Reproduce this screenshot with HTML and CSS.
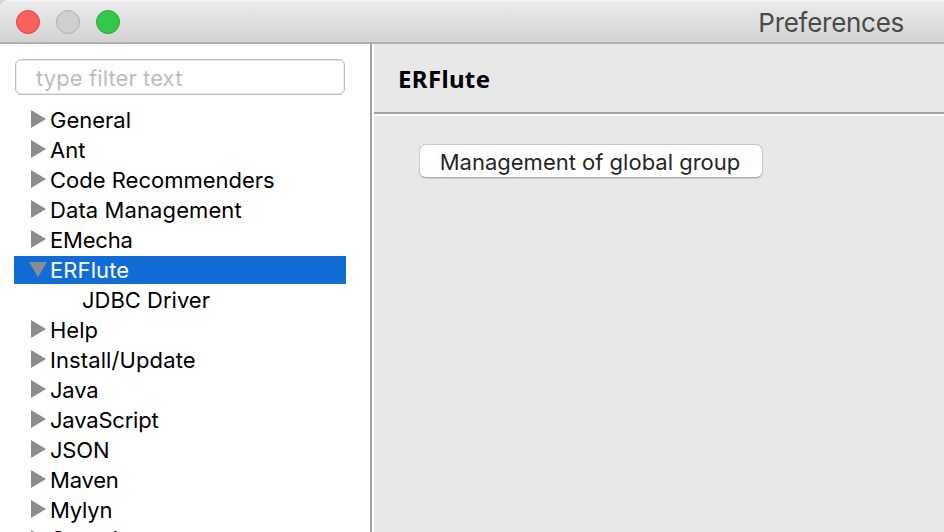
FILE: index.html
```html
<!DOCTYPE html>
<html lang="en">
<head>
<meta charset="utf-8">
<title>Preferences</title>
<link rel="stylesheet" href="styles.css">
</head>
<body>
<div class="window">
  <header class="titlebar">
    <div class="lights">
      <span class="light close"></span>
      <span class="light minimize"></span>
      <span class="light zoom"></span>
    </div>
    <span class="title">Preferences</span>
  </header>
  <div class="content">
    <aside class="sidebar">
      <input class="filter" type="text" placeholder="type filter text">
      <ul class="tree">
        <li class="row"><i class="arrow"></i><span>General</span></li>
        <li class="row"><i class="arrow"></i><span>Ant</span></li>
        <li class="row"><i class="arrow"></i><span>Code Recommenders</span></li>
        <li class="row"><i class="arrow"></i><span class="loose">Data Management</span></li>
        <li class="row"><i class="arrow"></i><span class="tight">EMecha</span></li>
        <li class="row selected"><i class="arrow open"></i><span class="loose">ERFlute</span></li>
        <li class="row child"><span>JDBC Driver</span></li>
        <li class="row"><i class="arrow"></i><span>Help</span></li>
        <li class="row"><i class="arrow"></i><span class="loose">Install/Update</span></li>
        <li class="row"><i class="arrow"></i><span class="tight">Java</span></li>
        <li class="row"><i class="arrow"></i><span class="tight">JavaScript</span></li>
        <li class="row"><i class="arrow"></i><span class="tight">JSON</span></li>
        <li class="row"><i class="arrow"></i><span class="tight">Maven</span></li>
        <li class="row"><i class="arrow"></i><span class="tight">Mylyn</span></li>
        <li class="row last"><i class="arrow"></i><span>Oomph</span></li>
      </ul>
    </aside>
    <main class="panel">
      <h1 class="heading">ERFlute</h1>
      <div class="body">
        <button class="button" type="button">Management of global group</button>
      </div>
    </main>
  </div>
</div>
</body>
</html>
```
FILE: styles.css
```css
* { box-sizing: border-box; }
body {
  margin: 0;
  background: #d8d8d8;
  font-family: Inter, "Liberation Sans", sans-serif;
  font-size: 22px;
  color: #000;
}
.window {
  width: 944px;
  height: 532px;
  overflow: hidden;
  display: flex;
  flex-direction: column;
  border-top-left-radius: 9px;
  background: #fff;
}
.titlebar {
  flex: none;
  height: 44px;
  display: flex;
  justify-content: space-between;
  padding: 0 40px 0 16px;
  background: linear-gradient(#f6f6f6 0, #ebebeb 2px, #d3d3d3 42px);
  border-bottom: 2px solid #b0b0b0;
}
.lights { display: flex; gap: 16px; padding-top: 10px; }
.light { width: 24px; height: 24px; border-radius: 50%; border: 1px solid; }
.close { background: #fc605c; border-color: #e0443f; }
.minimize { background: #d0d0d0; border-color: #b1b1b1; }
.zoom { background: #34c84a; border-color: #24a834; }
.title { font-size: 26px; letter-spacing: -0.28px; line-height: 46px; color: #4a4a4a; }
.content { flex: 1; min-height: 0; display: flex; }
.sidebar {
  width: 372px;
  flex: none;
  padding: 15px 0 0 14px;
  border-right: 2px solid #a0a0a0;
  overflow: hidden;
}
.filter {
  display: block;
  width: 330px;
  height: 36px;
  margin: 0 0 0 1px;
  padding: 2px 20px 0;
  border: 1px solid #bcbcbc;
  border-radius: 6px;
  box-shadow: inset 0 0 0 1px #ededed;
  font: inherit;
  letter-spacing: 0.1px;
  outline: none;
}
.filter::placeholder { color: #bdbdbd; opacity: 1; }
.tree { list-style: none; margin: 11px 0 0; padding: 0; width: 332px; }
.row {
  height: 28px;
  margin-bottom: 2px;
  padding-left: 17px;
  display: flex;
  line-height: 29px;
  white-space: nowrap;
}
.last { line-height: 27px; }
.loose { letter-spacing: 0.1px; }
.tight { letter-spacing: -0.2px; }
.arrow {
  flex: none;
  width: 15px;
  height: 18px;
  margin: 4px 4px 0 0;
  background: #8c8c8c;
  clip-path: polygon(0 0, 100% 50%, 0 100%);
}
.open {
  width: 18px;
  height: 15px;
  margin: 6px 3px 0 -2px;
  clip-path: polygon(0 0, 100% 0, 50% 100%);
}
.selected { background: #116cd6; color: #fff; }
.child { padding-left: 68px; }
.panel {
  flex: 1;
  margin-left: 2px;
  background: #e8e8e8;
}
.heading {
  height: 70px;
  margin: 0;
  padding-left: 24px;
  border-bottom: 2px solid #a0a0a0;
  font: bold 24px/70px "Noto Sans", sans-serif;
  letter-spacing: 0.35px;
}
.body { border-top: 2px solid #fff; padding: 28px 0 0 45px; }
.button {
  display: block;
  width: 344px;
  height: 34px;
  padding: 2px 2px 0 0;
  border: 1px solid #c8c8c8;
  border-bottom-color: #aaa;
  border-radius: 7px;
  box-shadow: 0 1px 1px #cfcfcf;
  background: #fff;
  color: #262626;
  font: inherit;
  white-space: nowrap;
}
```
